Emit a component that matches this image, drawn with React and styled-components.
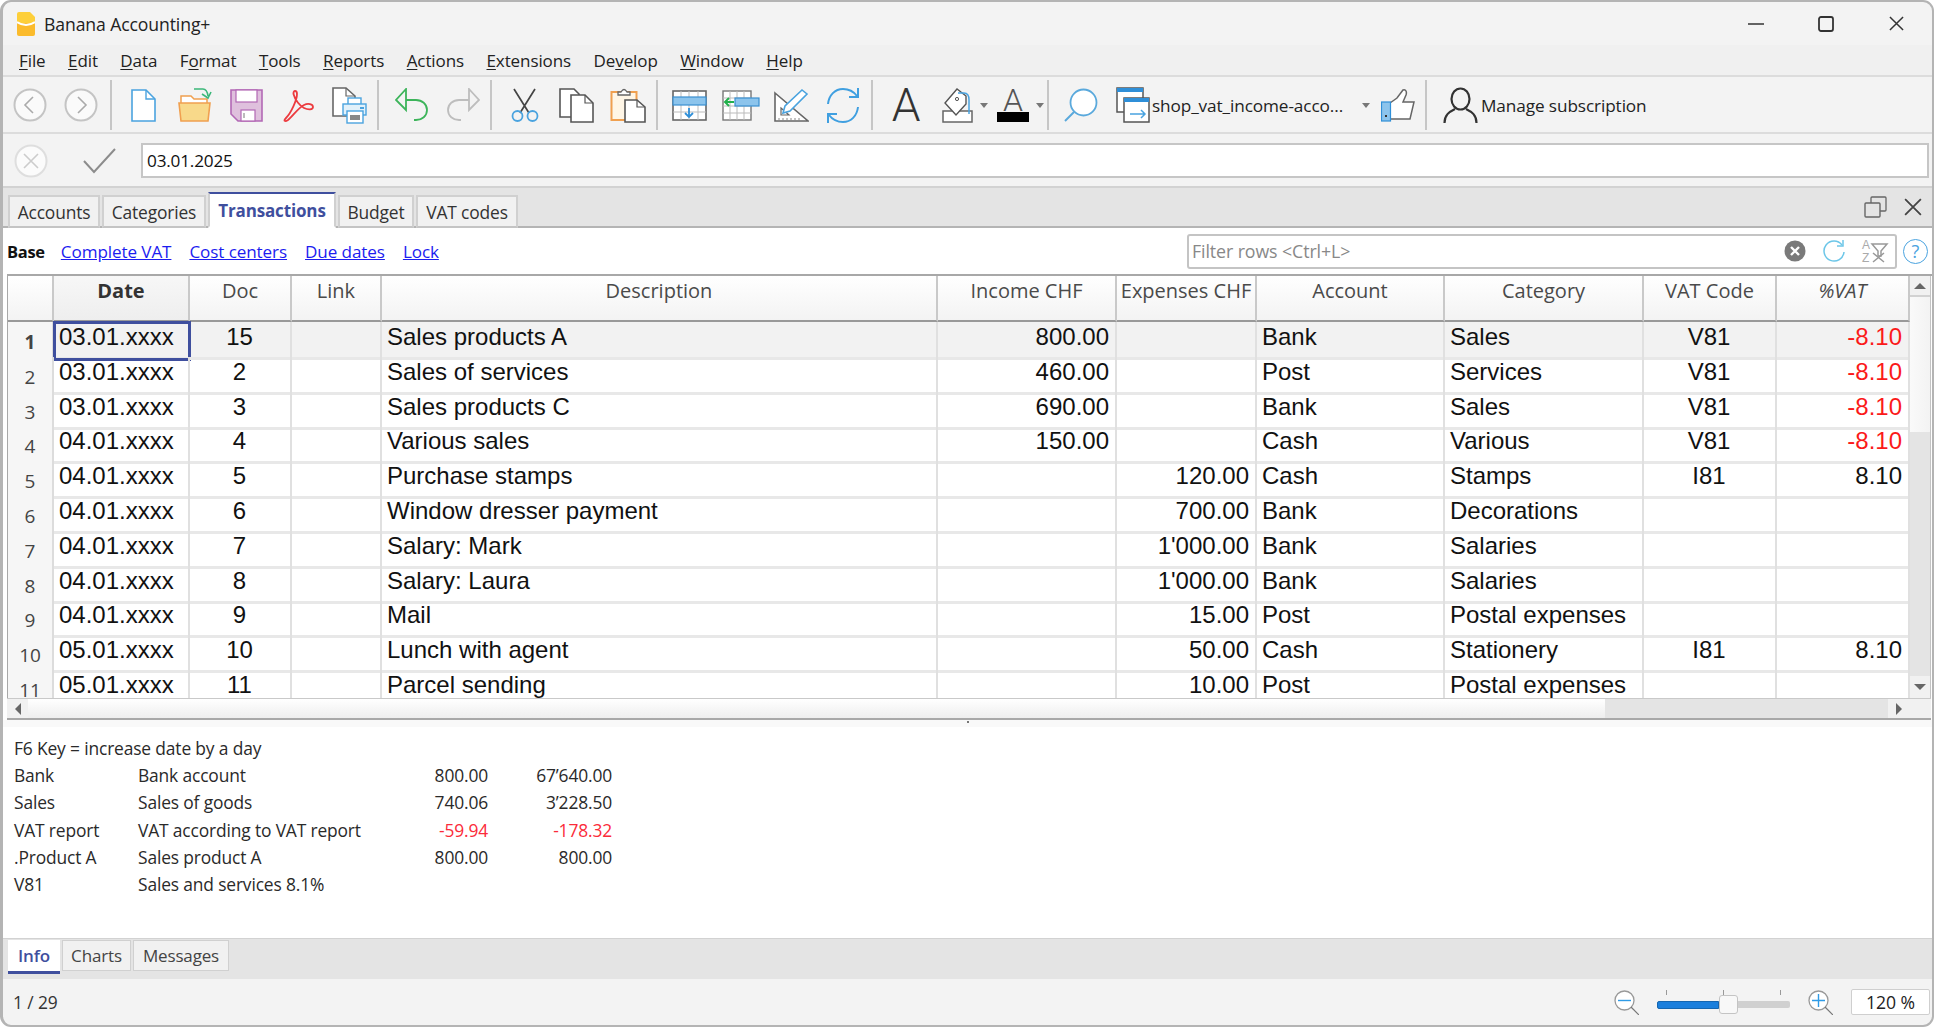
import React from 'react';
import styled, { createGlobalStyle } from 'styled-components';

const UI_FONT = '"Open Sans", "Noto Sans", sans-serif';
const GRID_FONT = '"Liberation Sans", Arial, sans-serif';
const ACTIVE = '#3f4f9e';
const COLUMNS = '46px 136px 102px 90px 556px 179px 140px 188px 199px 133px 133px';

const GlobalStyle = createGlobalStyle`
  html, body { margin: 0; padding: 0; background: #fff; }
  body { font-family: ${UI_FONT}; overflow: hidden; }
  * { box-sizing: border-box; }
`;

const Window = styled.div`
  width: 1934px;
  height: 1027px;
  display: flex;
  flex-direction: column;
  background: #f3f3f3;
  border: solid #b4b4b4;
  border-width: 2px 2px 2px 3px;
  border-radius: 11px;
  overflow: hidden;
`;

const TitleBar = styled.div`
  height: 43px;
  flex: none;
  display: flex;
  align-items: center;
  padding-left: 14px;
  font-size: 17.6px;
  color: #222;
  letter-spacing: -0.1px;
`;

const TitleText = styled.span`
  margin-left: 9px;
`;

const WinButtons = styled.div`
  margin-left: auto;
  display: flex;
  padding-right: 1px;
`;

const WinButton = styled.div`
  width: 70px;
  height: 30px;
  display: flex;
  align-items: center;
  justify-content: center;
`;

const MenuBar = styled.div`
  height: 32px;
  flex: none;
  display: flex;
  align-items: center;
  gap: 22.5px;
  padding: 1px 0 0 16px;
  background: #f0f0f0;
  border-bottom: 2px solid #dcdcdc;
  font-size: 17px;
  color: #222;
  letter-spacing: -0.1px;

  u { text-underline-offset: 2px; }
`;

const ToolBar = styled.div`
  height: 57px;
  flex: none;
  display: flex;
  align-items: center;
  padding: 1px 0 0 1px;
  border-bottom: 2px solid #dcdcdc;
`;

const Tool = styled.div`
  width: ${({ $w }) => $w || 51}px;
  margin-left: ${({ $ml }) => $ml || 0}px;
  flex: none;
  display: flex;
  align-items: center;
  justify-content: center;
`;

const Sep = styled.div`
  width: 2px;
  height: 50px;
  flex: none;
  margin: 0 ${({ $r }) => $r || 0}px 0 ${({ $l }) => $l || 0}px;
  background: #c6c6c6;
`;

const Caret = styled.div`
  width: 0;
  height: 0;
  flex: none;
  margin-left: ${({ $ml }) => $ml || 0}px;
  border-left: 4px solid transparent;
  border-right: 4px solid transparent;
  border-top: 5px solid #777;
`;

const BigGlyph = styled.span`
  font-family: Roboto, sans-serif;
  font-weight: 300;
  font-size: 46px;
  line-height: 46px;
  color: #333;
`;

const ToolText = styled.span`
  flex: none;
  width: ${({ $w }) => $w}px;
  margin-left: ${({ $ml }) => $ml || 0}px;
  font-size: 17.2px;
  color: #222;
  white-space: nowrap;
  letter-spacing: -0.1px;
`;

const FormulaBar = styled.div`
  height: 54px;
  flex: none;
  display: flex;
  align-items: center;
  padding: 1px 3px 0 11px;
  border-bottom: 2px solid #d2d2d2;
`;

const FormulaInput = styled.div`
  margin-left: 16px;
  flex: 1;
  height: 35px;
  display: flex;
  align-items: center;
  padding-left: 4px;
  background: #fff;
  border: 2px solid #c6c6c6;
  font-size: 17.2px;
  color: #111;
  letter-spacing: -0.2px;
`;

const TabStrip = styled.div`
  height: 40px;
  flex: none;
  display: flex;
  align-items: flex-end;
  background: #e4e4e4;
  border-bottom: 2px solid #b4b4b4;
  padding: 0 10px 0 5px;
`;

const TabItem = styled.div`
  width: ${({ $w }) => $w}px;
  height: ${({ $active }) => ($active ? 36 : 33)}px;
  margin: 0 2px -2px 0;
  display: flex;
  align-items: center;
  justify-content: center;
  font-size: ${({ $active }) => ($active ? 17 : 17.4)}px;
  letter-spacing: -0.15px;
  color: ${({ $active }) => ($active ? ACTIVE : '#333')};
  font-weight: ${({ $active }) => ($active ? 700 : 400)};
  background: ${({ $active }) => ($active ? '#fff' : '#f1f1f1')};
  border: 2px solid #d0d0d0;
  border-bottom-color: ${({ $active }) => ($active ? '#fff' : '#c4c4c4')};
  border-top-color: ${({ $active }) => ($active ? ACTIVE : '#d0d0d0')};
`;

const StripIcons = styled.div`
  margin-left: auto;
  align-self: center;
  display: flex;
  align-items: center;
  gap: 17px;
`;

const Sheet = styled.div`
  flex: none;
  display: flex;
  flex-direction: column;
  background: #fff;
  padding-left: 4px;
`;

const ViewRow = styled.div`
  height: 46px;
  display: flex;
  align-items: center;
`;

const ViewLink = styled.a`
  margin-left: ${({ $ml }) => $ml}px;
  font-size: 17.1px;
  color: #1c1cf0;
  text-decoration: underline;
  letter-spacing: -0.1px;
`;

const ViewBase = styled.span`
  font-size: 16.5px;
  font-weight: 700;
  color: #111;
  letter-spacing: -0.3px;
`;

const FilterBox = styled.div`
  margin-left: auto;
  width: 710px;
  height: 35px;
  display: flex;
  align-items: center;
  padding: 0 7px 0 3px;
  background: #fff;
  border: 2px solid #c4c4c4;
  border-radius: 3px;
  font-size: 17.8px;
  color: #888;
  letter-spacing: -0.1px;
`;

const FilterIcons = styled.div`
  margin-left: auto;
  display: flex;
  align-items: center;
  gap: 16px;
`;

const HelpMark = styled.div`
  width: 25px;
  height: 25px;
  margin: 0 4px 0 6px;
  flex: none;
  border-radius: 50%;
  border: 1.5px solid #4aa3df;
  display: flex;
  align-items: center;
  justify-content: center;
  font-size: 18px;
  color: #4aa3df;
`;

const TableArea = styled.div`
  display: flex;
  height: 424px;
  border-top: 2px solid #a8a8a8;
`;

const Grid = styled.div`
  width: 1903px;
  height: 100%;
  flex: none;
  overflow: hidden;
  border-left: 1px solid #a8a8a8;
`;

const HeaderRow = styled.div`
  display: grid;
  grid-template-columns: ${COLUMNS};
  height: 46px;
`;

const HeaderCell = styled.div`
  padding-top: 2px;
  text-align: center;
  font-size: 20px;
  line-height: 26px;
  white-space: nowrap;
  overflow: hidden;
  color: ${({ $bold }) => ($bold ? '#333' : '#4a4a4a')};
  font-weight: ${({ $bold }) => ($bold ? 700 : 400)};
  font-style: ${({ $italic }) => ($italic ? 'italic' : 'normal')};
  background: ${({ $bold }) =>
    $bold ? 'linear-gradient(#f7f7f7, #eeeeee)' : 'linear-gradient(#ffffff, #f3f3f3)'};
  border-right: 2px solid #c9c9c9;
  border-bottom: 2px solid #999;
`;

const Row = styled.div`
  display: grid;
  grid-template-columns: ${COLUMNS};
  height: 34.8px;
  background: ${({ $current }) => ($current ? '#f2f2f2' : '#fff')};
`;

const NumCell = styled.div`
  padding-top: 5px;
  text-align: center;
  font-size: 19px;
  line-height: 30px;
  color: #444;
  font-weight: ${({ $current }) => ($current ? 700 : 400)};
  background: #f6f6f6;
  border-right: 2px solid #dcdcdc;
  border-bottom: 3px solid #e8e8e8;
`;

const Cell = styled.div`
  padding: 0 ${({ $pr }) => $pr || 6}px 0 5px;
  text-align: ${({ $align }) => $align || 'left'};
  font-family: ${GRID_FONT};
  font-size: 24px;
  line-height: 30px;
  white-space: nowrap;
  overflow: hidden;
  color: ${({ $red }) => ($red ? '#fb1a1a' : '#111')};
  border-right: 2px solid #e0e0e0;
  border-bottom: 3px solid #e8e8e8;
  outline: ${({ $selected }) => ($selected ? `3px solid ${ACTIVE}` : 'none')};
  outline-offset: -2px;
`;

const VScroll = styled.div`
  width: 21px;
  flex: none;
  display: flex;
  flex-direction: column;
  border-right: 1px solid #c4c4c4;
`;

const ScrollArrow = styled.div`
  flex: none;
  width: ${({ $w }) => $w || 'auto'};
  height: ${({ $h }) => $h || 'auto'};
  display: flex;
  align-items: center;
  justify-content: center;
  background: #f1f1f1;
`;

const ScrollThumb = styled.div`
  flex: none;
  height: ${({ $h }) => $h || 'auto'};
  width: ${({ $w }) => $w || 'auto'};
  background: ${({ $horizontal }) =>
    $horizontal ? 'linear-gradient(#ffffff, #eeeeee)' : 'linear-gradient(90deg, #fafafa, #f3f3f3)'};
  border-top: ${({ $horizontal }) => ($horizontal ? 'none' : '2px solid #d2d2d2')};
`;

const ScrollTrack = styled.div`
  flex: 1;
  background: #e4e4e4;
`;

const Triangle = styled.div`
  width: 0;
  height: 0;
  border-style: solid;
  border-color: transparent;
  ${({ $dir }) =>
    ({
      up: 'border-width: 0 6px 6px 6px; border-bottom-color: #666;',
      down: 'border-width: 6px 6px 0 6px; border-top-color: #666;',
      left: 'border-width: 6px 6px 6px 0; border-right-color: #666;',
      right: 'border-width: 6px 0 6px 6px; border-left-color: #666;',
    })[$dir]}
`;

const HScroll = styled.div`
  height: 22px;
  display: flex;
  margin-right: 1px;
  background: #f1f1f1;
  border-top: 1px solid #c9c9c9;
  border-bottom: 2px solid #a8a8a8;
`;

const Splitter = styled.div`
  height: 7px;
  flex: none;
  background: #f9f9f9;
  display: flex;
  justify-content: center;
`;

const SplitterDot = styled.div`
  width: 2px;
  height: 2px;
  margin-top: 1px;
  background: #777;
`;

const InfoPanel = styled.div`
  height: 211px;
  flex: none;
  padding: 7.5px 0 0 11px;
  background: #fff;
  display: grid;
  grid-template-columns: 124px 260px 90px 124px;
  grid-auto-rows: 27.2px;
  align-items: center;
  justify-content: start;
  font-size: 17.4px;
  color: #2a2a2a;
  letter-spacing: -0.15px;
`;

const InfoHint = styled.div`
  grid-column: 1 / -1;
`;

const InfoValue = styled.div`
  text-align: right;
  color: ${({ $red }) => ($red ? '#fb2b3a' : '#2a2a2a')};
`;

const BottomTabs = styled.div`
  height: 41px;
  flex: none;
  display: flex;
  padding: 2px 0 0 5px;
  background: #e4e4e4;
  border-top: 1px solid #d2d2d2;
`;

const BottomTab = styled.div`
  width: ${({ $w }) => $w}px;
  height: ${({ $active }) => ($active ? 34 : 31)}px;
  margin-right: 2px;
  margin-top: -1px;
  display: flex;
  align-items: center;
  justify-content: center;
  font-size: 17px;
  letter-spacing: -0.15px;
  color: ${({ $active }) => ($active ? ACTIVE : '#444')};
  font-weight: ${({ $active }) => ($active ? 600 : 400)};
  background: ${({ $active }) => ($active ? '#fff' : '#f1f1f1')};
  border: ${({ $active }) => ($active ? 'none' : '1.5px solid #d0d0d0')};
  border-bottom: ${({ $active }) => ($active ? `3px solid ${ACTIVE}` : '1.5px solid #d0d0d0')};
`;

const StatusBar = styled.div`
  flex: 1;
  display: flex;
  align-items: center;
  padding: 0 2px 0 10px;
  font-size: 17.4px;
  color: #333;
  letter-spacing: -0.1px;
`;

const ZoomGroup = styled.div`
  margin-left: auto;
  display: flex;
  align-items: center;
  gap: 18px;
`;

const SliderBox = styled.div`
  width: 133px;
  display: flex;
  flex-direction: column;
  gap: 3px;
`;

const SliderTicks = styled.div`
  display: flex;
  justify-content: space-between;
  padding: 0 9px;
`;

const SliderTick = styled.div`
  width: 1px;
  height: 5px;
  background: #999;
`;

const SliderTrack = styled.div`
  display: flex;
  align-items: center;
  height: 20px;
  margin-top: -3px;
`;

const SliderFill = styled.div`
  width: 62px;
  height: 8px;
  background: #1b7fdc;
  border: 1px solid #1566b0;
  border-radius: 2px 0 0 2px;
`;

const SliderRest = styled.div`
  flex: 1;
  height: 7px;
  background: #d0d0d0;
  border-radius: 0 2px 2px 0;
`;

const SliderThumb = styled.div`
  width: 19px;
  height: 19px;
  flex: none;
  background: #f8f8f8;
  border: 1px solid #c4c4c4;
  border-radius: 3px;
`;

const ZoomValue = styled.div`
  width: 79px;
  height: 26px;
  display: flex;
  align-items: center;
  justify-content: center;
  background: #fff;
  border: 1.5px solid #cfcfcf;
  border-radius: 2px;
  font-size: 17.6px;
  color: #222;
`;

const Logo = () => (
  <svg width="18" height="24" viewBox="0 0 18 24">
    <path d="M2 0 H13 L18 5 V12 H0 V2 Q0 0 2 0 Z" fill="#fdcf3a" />
    <path d="M0 11 H18 V22 Q18 24 16 24 H2 Q0 24 0 22 Z" fill="#fbbb2c" />
    <path d="M0 10 Q9 16 18 10" fill="none" stroke="#fff" strokeWidth="2" />
  </svg>
);

const CircleNav = ({ d }) => (
  <svg width="34" height="34" viewBox="0 0 34 34">
    <circle cx="17" cy="17" r="15.5" fill="#fafafa" stroke="#c4c4c4" strokeWidth="2" />
    <path d={d} fill="none" stroke="#aaa" strokeWidth="1.6" />
  </svg>
);

const NewDocIcon = () => (
  <svg width="25" height="33" viewBox="0 0 25 33">
    <path d="M1 1 H15 L24 10 V32 H1 Z" fill="#fff" stroke="#4aa3df" strokeWidth="1.6" />
    <path d="M15 1 V10 H24" fill="none" stroke="#4aa3df" strokeWidth="1.4" />
  </svg>
);

const OpenIcon = () => (
  <svg width="34" height="36" viewBox="0 0 34 36">
    <path d="M3 17 V9 H13 L16 12 H29 V17" fill="#fff" stroke="#f0a050" strokeWidth="1.5" />
    <path d="M1 16 H32 L30 34 H3 Z" fill="#f8d98a" stroke="#f0a050" strokeWidth="1.6" />
    <path d="M16 2 H25 Q29 2 30 9 M24 7 L30 11 L33 5" fill="none" stroke="#3cb87a" strokeWidth="1.6" />
  </svg>
);

const SaveIcon = () => (
  <svg width="33" height="33" viewBox="0 0 33 33">
    <path d="M1 1 H32 V32 H8 L1 25 Z" fill="#dfc0dd" stroke="#b268b5" strokeWidth="1.6" />
    <rect x="6" y="1" width="21" height="12" fill="#fff" stroke="#b268b5" strokeWidth="1.2" />
    <rect x="11" y="21" width="14" height="11" fill="#fff" stroke="#b268b5" strokeWidth="1.2" />
    <rect x="13" y="24" width="2" height="5" fill="#bbb" />
  </svg>
);

const PdfIcon = () => (
  <svg width="32" height="33" viewBox="0 0 32 33">
    <path
      d="M11.5 5 C11 1 15 1 15 5 C15 11 9 24 4 29 C1 32 3 33 6 31 C11 27 16 19 22 16 C26 14 31 15 31 18 C31 21 26 21 22 19 C18 17 13 11 11.5 5 Z"
      fill="none"
      stroke="#ec3b3f"
      strokeWidth="1.8"
    />
  </svg>
);

const PrintIcon = () => (
  <svg width="35" height="37" viewBox="0 0 35 37">
    <path d="M1 1 H14 L23 9 V29 H1 Z" fill="#fff" stroke="#666" strokeWidth="1.6" />
    <path d="M14 1 V9 H23" fill="none" stroke="#666" strokeWidth="1.2" />
    <rect x="16" y="11" width="13" height="7" fill="#fff" stroke="#4aa3df" strokeWidth="1.4" />
    <rect x="11" y="17" width="23" height="11" fill="#e2f1fa" stroke="#4aa3df" strokeWidth="1.4" />
    <rect x="28" y="20" width="4" height="2" fill="#4aa3df" />
    <rect x="15" y="24" width="16" height="12" fill="#fff" stroke="#4aa3df" strokeWidth="1.4" />
    <rect x="18" y="28" width="10" height="5" fill="#888" />
  </svg>
);

const UndoIcon = ({ color, flip }) => (
  <svg width="34" height="34" viewBox="0 0 34 34" transform={flip ? 'scale(-1 1)' : undefined}>
    <path d="M11 1 L1 12 L11 22 Z" fill="none" stroke={color} strokeWidth="1.8" />
    <path d="M11 12 H21 C27 12 32 16 32 22 C32 28 27 32 21 32 H19" fill="none" stroke={color} strokeWidth="1.8" />
  </svg>
);

const ScissorsIcon = () => (
  <svg width="28" height="35" viewBox="0 0 28 35">
    <path d="M3 1 L18 25 M24 1 L9 25" fill="none" stroke="#444" strokeWidth="1.7" />
    <circle cx="6.5" cy="28" r="5" fill="none" stroke="#4aa3df" strokeWidth="1.8" />
    <circle cx="21.5" cy="28" r="5" fill="none" stroke="#4aa3df" strokeWidth="1.8" />
  </svg>
);

const CopyIcon = () => (
  <svg width="35" height="35" viewBox="0 0 35 35">
    <path d="M1 1 H15 L20 6 V29 H1 Z" fill="#fff" stroke="#555" strokeWidth="1.6" />
    <path d="M12 7 H26 L34 15 V34 H12 Z" fill="#fff" stroke="#555" strokeWidth="1.6" />
    <path d="M26 7 V15 H34" fill="none" stroke="#555" strokeWidth="1.2" />
  </svg>
);

const PasteIcon = () => (
  <svg width="36" height="36" viewBox="0 0 36 36">
    <rect x="1.5" y="5" width="25" height="28" fill="#fff6e6" stroke="#f0a050" strokeWidth="2" />
    <path d="M8 8 V5 H11 Q14 0 17 5 H20 V8 Z" fill="#fff" stroke="#666" strokeWidth="1.3" />
    <path d="M15 13 H27 L35 20 V35 H15 Z" fill="#fff" stroke="#555" strokeWidth="1.6" />
    <path d="M27 13 V20 H35" fill="none" stroke="#555" strokeWidth="1.2" />
  </svg>
);

const InsertRowIcon = () => (
  <svg width="35" height="31" viewBox="0 0 35 31">
    <rect x="1" y="1" width="33" height="29" fill="#fff" stroke="#666" strokeWidth="1.6" />
    <path d="M1 22 H34 M9 1 V30 M17 1 V30 M26 1 V30" stroke="#bbb" strokeWidth="1" />
    <rect x="1" y="7" width="33" height="8" fill="#8cc4ec" stroke="#3a8fd0" strokeWidth="1.2" />
    <path d="M17 18 V27 M13 23 L17 27 L21 23" fill="none" stroke="#2f8fd8" strokeWidth="1.8" />
  </svg>
);

const InsertColIcon = () => (
  <svg width="38" height="31" viewBox="0 0 38 31">
    <rect x="1" y="1" width="28" height="29" fill="#fff" stroke="#777" strokeWidth="1.4" />
    <path d="M1 8 H29 M1 16 H29 M1 23 H29 M8 1 V30 M15 1 V30 M22 1 V30" stroke="#bbb" strokeWidth="1" />
    <rect x="13" y="8" width="24" height="8" fill="#8cc4ec" stroke="#3a8fd0" strokeWidth="1.2" />
    <path d="M12 12 H3 M7 8 L3 12 L7 16" fill="none" stroke="#22b04c" strokeWidth="2" />
  </svg>
);

const EditIcon = () => (
  <svg width="35" height="35" viewBox="0 0 35 35">
    <path d="M1 5 L34 33 H1 Z" fill="#fff" stroke="#666" strokeWidth="1.6" />
    <path d="M7 20 L15 27 H7 Z" fill="none" stroke="#666" strokeWidth="1.2" />
    <path d="M5 33 V30 M9 33 V30 M13 33 V30 M17 33 V30 M21 33 V30 M25 33 V30" stroke="#888" strokeWidth="1" />
    <path d="M9 25 L11 18 L28 2 L33 6 L16 23 Z" fill="#fff" stroke="#4aa3df" strokeWidth="1.6" />
  </svg>
);

const RefreshIcon = () => (
  <svg width="35" height="37" viewBox="0 0 35 37">
    <path
      d="M2 17 C3 8 9 2 17 2 C23 2 28 5 31 9 M32 1 V10 H23 M32 20 C31 29 25 35 17 35 C11 35 6 32 3 28 M2 36 V27 H11"
      fill="none"
      stroke="#3f9fe0"
      strokeWidth="2"
    />
  </svg>
);

const RowsRefreshIcon = () => (
  <svg width="24" height="24" viewBox="0 0 24 24">
    <path d="M20 6 A10 10 0 1 0 22 13" fill="none" stroke="#6cc6e8" strokeWidth="1.5" />
    <path d="M21 1 V7 H15" fill="none" stroke="#6cc6e8" strokeWidth="1.5" />
  </svg>
);

const FillIcon = () => (
  <svg width="31" height="35" viewBox="0 0 31 35">
    <rect x="1" y="23" width="29" height="11" fill="#fff" stroke="#666" strokeWidth="1.5" />
    <path d="M15 1 L3 15 L14 27 L24 16 V8 Z" fill="#fff" stroke="#555" strokeWidth="1.4" />
    <circle cx="15" cy="11" r="1.6" fill="none" stroke="#555" />
    <path d="M16 5 H22 Q27 5 27 12 V26" fill="none" stroke="#4aa3df" strokeWidth="1.5" />
  </svg>
);

const FontColorIcon = () => (
  <svg width="32" height="36" viewBox="0 0 32 36" overflow="visible">
    <text x="16" y="24" textAnchor="middle" fontFamily="Roboto, sans-serif" fontWeight="300" fontSize="32" fill="#555">
      A
    </text>
    <rect x="0" y="25" width="32" height="10" fill="#000" />
  </svg>
);

const SearchIcon = () => (
  <svg width="34" height="34" viewBox="0 0 34 34">
    <circle cx="19.5" cy="14.5" r="13" fill="#fff" stroke="#5aa9dc" strokeWidth="1.8" />
    <path d="M10 24 L1 33" stroke="#5aa9dc" strokeWidth="2" />
  </svg>
);

const WindowsIcon = () => (
  <svg width="34" height="36" viewBox="0 0 34 36">
    <rect x="1" y="1" width="26" height="24" fill="#fff" stroke="#555" strokeWidth="1.5" />
    <rect x="1" y="1" width="26" height="4" fill="#2f8fd8" />
    <rect x="8" y="11" width="25" height="24" fill="#fff" stroke="#555" strokeWidth="1.5" />
    <rect x="8" y="11" width="25" height="4" fill="#2f8fd8" />
    <path d="M14 27 H29 M25 23 L29 27 L25 31" fill="none" stroke="#4aa3df" strokeWidth="1.5" />
  </svg>
);

const ThumbIcon = () => (
  <svg width="34" height="33" viewBox="0 0 34 33">
    <path d="M9 14 L16 9 L22 1 C25 0 26 3 25 6 L22 13 H33 L29 30 H9" fill="#fff" stroke="#666" strokeWidth="1.5" />
    <rect x="0.5" y="13" width="9" height="19" fill="#8cc4ec" stroke="#2f8fd8" strokeWidth="1.2" />
    <rect x="4" y="26" width="2" height="2" fill="#333" />
  </svg>
);

const UserIcon = () => (
  <svg width="35" height="37" viewBox="0 0 35 37">
    <ellipse cx="17.5" cy="12" rx="9" ry="10.5" fill="none" stroke="#333" strokeWidth="2.2" />
    <path d="M1.5 36 C1.5 28 6 25 12 22 M33.5 36 C33.5 28 29 25 23 22" fill="none" stroke="#333" strokeWidth="2.2" />
  </svg>
);

const CloseGlyph = ({ size, color = '#333', width = 1.6 }) => (
  <svg width={size} height={size} viewBox="0 0 16 16">
    <path d="M1 1 L15 15 M15 1 L1 15" fill="none" stroke={color} strokeWidth={width} />
  </svg>
);

const CancelIcon = () => (
  <svg width="34" height="34" viewBox="0 0 34 34">
    <circle cx="17" cy="17" r="15.5" fill="#fbfbfb" stroke="#dedede" strokeWidth="2" />
    <path d="M10 10 L24 24 M24 10 L10 24" stroke="#ccc" strokeWidth="1.6" />
  </svg>
);

const CheckIcon = () => (
  <svg width="33" height="26" viewBox="0 0 33 26">
    <path d="M1 13 L11 24 L32 1" fill="none" stroke="#8c8c8c" strokeWidth="2" />
  </svg>
);

const RestoreIcon = () => (
  <svg width="23" height="22" viewBox="0 0 23 22">
    <rect x="7" y="1" width="15" height="14" rx="1" fill="none" stroke="#666" strokeWidth="1.3" />
    <rect x="1" y="7" width="15" height="14" rx="1" fill="#e4e4e4" stroke="#666" strokeWidth="1.4" />
  </svg>
);

const ClearIcon = () => (
  <svg width="22" height="22" viewBox="0 0 22 22">
    <circle cx="11" cy="11" r="10.5" fill="#7a7a7a" />
    <path d="M7 7 L15 15 M15 7 L7 15" stroke="#fff" strokeWidth="2.4" />
  </svg>
);

const SortFilterIcon = () => (
  <svg width="26" height="24" viewBox="0 0 26 24" overflow="visible">
    <text x="0" y="10" fontFamily={GRID_FONT} fontSize="12" fill="#aaa">A</text>
    <text x="0" y="23" fontFamily={GRID_FONT} fontSize="12" fill="#aaa">Z</text>
    <path d="M10 5 H25 L19 12 V17 H16 V12 Z" fill="none" stroke="#999" strokeWidth="1.5" />
    <path d="M11 14 L22 23 M22 14 L11 23" stroke="#999" strokeWidth="1.5" />
  </svg>
);

const ZoomIcon = ({ plus }) => (
  <svg width="25" height="25" viewBox="0 0 25 25">
    <circle cx="10.5" cy="10.5" r="9.5" fill="#fff" stroke="#999" strokeWidth="1.3" />
    <path d={plus ? 'M4 10.5 H17 M10.5 4 V17' : 'M4 10.5 H17'} stroke="#2f9be6" strokeWidth="1.4" />
    <path d="M17 17 L25 25" stroke="#777" strokeWidth="1.2" />
  </svg>
);

// text before the mnemonic, the mnemonic, text after it
const MENU = [
  ['', 'F', 'ile'],
  ['', 'E', 'dit'],
  ['', 'D', 'ata'],
  ['F', 'o', 'rmat'],
  ['', 'T', 'ools'],
  ['', 'R', 'eports'],
  ['', 'A', 'ctions'],
  ['', 'E', 'xtensions'],
  ['De', 'v', 'elop'],
  ['', 'W', 'indow'],
  ['', 'H', 'elp'],
];

const TABS = [
  { label: 'Accounts', w: 92 },
  { label: 'Categories', w: 104 },
  { label: 'Transactions', w: 128, active: true },
  { label: 'Budget', w: 76 },
  { label: 'VAT codes', w: 102 },
];

const HEADERS = ['', 'Date', 'Doc', 'Link', 'Description', 'Income CHF', 'Expenses CHF', 'Account', 'Category', 'VAT Code', '%VAT'];

const ROWS = [
  ['03.01.xxxx', '15', 'Sales products A', '800.00', '', 'Bank', 'Sales', 'V81', '-8.10'],
  ['03.01.xxxx', '2', 'Sales of services', '460.00', '', 'Post', 'Services', 'V81', '-8.10'],
  ['03.01.xxxx', '3', 'Sales products C', '690.00', '', 'Bank', 'Sales', 'V81', '-8.10'],
  ['04.01.xxxx', '4', 'Various sales', '150.00', '', 'Cash', 'Various', 'V81', '-8.10'],
  ['04.01.xxxx', '5', 'Purchase stamps', '', '120.00', 'Cash', 'Stamps', 'I81', '8.10'],
  ['04.01.xxxx', '6', 'Window dresser payment', '', '700.00', 'Bank', 'Decorations', '', ''],
  ['04.01.xxxx', '7', 'Salary: Mark', '', "1'000.00", 'Bank', 'Salaries', '', ''],
  ['04.01.xxxx', '8', 'Salary: Laura', '', "1'000.00", 'Bank', 'Salaries', '', ''],
  ['04.01.xxxx', '9', 'Mail', '', '15.00', 'Post', 'Postal expenses', '', ''],
  ['05.01.xxxx', '10', 'Lunch with agent', '', '50.00', 'Cash', 'Stationery', 'I81', '8.10'],
  ['05.01.xxxx', '11', 'Parcel sending', '', '10.00', 'Post', 'Postal expenses', '', ''],
];

const INFO = [
  ['Bank', 'Bank account', '800.00', '67’640.00'],
  ['Sales', 'Sales of goods', '740.06', '3’228.50'],
  ['VAT report', 'VAT according to VAT report', '-59.94', '-178.32'],
  ['.Product A', 'Sales product A', '800.00', '800.00'],
  ['V81', 'Sales and services 8.1%', '', ''],
];

function DataRow({ cells, index }) {
  const [date, doc, desc, income, expenses, account, category, code, pct] = cells;
  const current = index === 0;
  return (
    <Row $current={current}>
      <NumCell $current={current}>{index + 1}</NumCell>
      <Cell $selected={current}>{date}</Cell>
      <Cell $align="center">{doc}</Cell>
      <Cell />
      <Cell>{desc}</Cell>
      <Cell $align="right">{income}</Cell>
      <Cell $align="right">{expenses}</Cell>
      <Cell>{account}</Cell>
      <Cell>{category}</Cell>
      <Cell $align="center">{code}</Cell>
      <Cell $align="right" $red={pct.startsWith('-')}>{pct}</Cell>
    </Row>
  );
}

export default function App() {
  return (
    <>
      <GlobalStyle />
      <Window>
        <TitleBar>
          <Logo />
          <TitleText>Banana Accounting+</TitleText>
          <WinButtons>
            <WinButton>
              <svg width="16" height="2" viewBox="0 0 16 2"><path d="M0 1 H16" stroke="#333" strokeWidth="1.6" /></svg>
            </WinButton>
            <WinButton>
              <svg width="16" height="16" viewBox="0 0 16 16"><rect x="1" y="1" width="14" height="14" rx="2" fill="none" stroke="#333" strokeWidth="1.8" /></svg>
            </WinButton>
            <WinButton>
              <CloseGlyph size={15} />
            </WinButton>
          </WinButtons>
        </TitleBar>

        <MenuBar>
          {MENU.map(([before, key, after]) => (
            <span key={before + key + after}>{before}<u>{key}</u>{after}</span>
          ))}
        </MenuBar>

        <ToolBar>
          <Tool><CircleNav d="M20 9 L12 17 L20 25" /></Tool>
          <Tool><CircleNav d="M14 9 L22 17 L14 25" /></Tool>
          <Sep $l={4} $r={6} />
          <Tool $w={51.5}><NewDocIcon /></Tool>
          <Tool $w={51.5}><OpenIcon /></Tool>
          <Tool $w={51.5}><SaveIcon /></Tool>
          <Tool $w={51.5}><PdfIcon /></Tool>
          <Tool $w={51.5}><PrintIcon /></Tool>
          <Sep $l={1.5} $r={7} />
          <Tool><UndoIcon color="#3cb45a" /></Tool>
          <Tool><UndoIcon color="#bdbdbd" flip /></Tool>
          <Sep $l={2} $r={7} />
          <Tool $w={51.5}><ScissorsIcon /></Tool>
          <Tool $w={51.5}><CopyIcon /></Tool>
          <Tool $w={51.5}><PasteIcon /></Tool>
          <Sep $l={2.5} $r={6} />
          <Tool><InsertRowIcon /></Tool>
          <Tool><InsertColIcon /></Tool>
          <Tool><EditIcon /></Tool>
          <Tool $w={53}><RefreshIcon /></Tool>
          <Sep $l={1} $r={7} />
          <Tool $w={52}><BigGlyph>A</BigGlyph></Tool>
          <Tool $ml={10} $w={31}><FillIcon /></Tool>
          <Caret $ml={7} />
          <Tool $ml={9} $w={32}><FontColorIcon /></Tool>
          <Caret $ml={7} />
          <Sep $l={3} />
          <Tool $ml={15} $w={34}><SearchIcon /></Tool>
          <Tool $ml={18} $w={34}><WindowsIcon /></Tool>
          <ToolText $ml={2} $w={193}>shop_vat_income-acco...</ToolText>
          <Caret $ml={17} />
          <Tool $ml={11} $w={34}><ThumbIcon /></Tool>
          <Sep $l={10} />
          <Tool $ml={16} $w={35}><UserIcon /></Tool>
          <ToolText $ml={3} $w={180}>Manage subscription</ToolText>
        </ToolBar>

        <FormulaBar>
          <CancelIcon />
          <Tool $ml={25} $w={52}><CheckIcon /></Tool>
          <FormulaInput>03.01.2025</FormulaInput>
        </FormulaBar>

        <TabStrip>
          {TABS.map((t) => (
            <TabItem key={t.label} $w={t.w} $active={t.active}>{t.label}</TabItem>
          ))}
          <StripIcons>
            <RestoreIcon />
            <CloseGlyph size={18} color="#444" />
          </StripIcons>
        </TabStrip>

        <Sheet>
          <ViewRow>
            <ViewBase>Base</ViewBase>
            <ViewLink $ml={16}>Complete VAT</ViewLink>
            <ViewLink $ml={18}>Cost centers</ViewLink>
            <ViewLink $ml={18}>Due dates</ViewLink>
            <ViewLink $ml={18}>Lock</ViewLink>
            <FilterBox>
              Filter rows &lt;Ctrl+L&gt;
              <FilterIcons>
                <ClearIcon />
                <RowsRefreshIcon />
                <SortFilterIcon />
              </FilterIcons>
            </FilterBox>
            <HelpMark>?</HelpMark>
          </ViewRow>

          <TableArea>
            <Grid>
              <HeaderRow>
                {HEADERS.map((h) => (
                  <HeaderCell key={h} $bold={h === 'Date'} $italic={h === '%VAT'}>{h}</HeaderCell>
                ))}
              </HeaderRow>
              {ROWS.map((cells, i) => (
                <DataRow key={cells[1]} cells={cells} index={i} />
              ))}
            </Grid>
            <VScroll>
              <ScrollArrow $h="19px"><Triangle $dir="up" /></ScrollArrow>
              <ScrollThumb $h="137px" />
              <ScrollTrack />
              <ScrollArrow $h="22px"><Triangle $dir="down" /></ScrollArrow>
            </VScroll>
          </TableArea>

          <HScroll>
            <ScrollArrow $w="21px"><Triangle $dir="left" /></ScrollArrow>
            <ScrollThumb $horizontal $w="1577px" />
            <ScrollTrack />
            <ScrollArrow $w="22px"><Triangle $dir="right" /></ScrollArrow>
            <ScrollArrow $w="21px" />
          </HScroll>
        </Sheet>

        <Splitter><SplitterDot /></Splitter>

        <InfoPanel>
          <InfoHint>F6 Key = increase date by a day</InfoHint>
          {INFO.map(([code, name, a, b]) => (
            <React.Fragment key={code}>
              <div>{code}</div>
              <div>{name}</div>
              <InfoValue $red={a.startsWith('-')}>{a}</InfoValue>
              <InfoValue $red={b.startsWith('-')}>{b}</InfoValue>
            </React.Fragment>
          ))}
        </InfoPanel>

        <BottomTabs>
          <BottomTab $active $w={52}>Info</BottomTab>
          <BottomTab $w={69}>Charts</BottomTab>
          <BottomTab $w={96}>Messages</BottomTab>
        </BottomTabs>

        <StatusBar>
          1 / 29
          <ZoomGroup>
            <ZoomIcon />
            <SliderBox>
              <SliderTicks>
                <SliderTick />
                <SliderTick />
                <SliderTick />
              </SliderTicks>
              <SliderTrack>
                <SliderFill />
                <SliderThumb />
                <SliderRest />
              </SliderTrack>
            </SliderBox>
            <ZoomIcon plus />
            <ZoomValue>120 %</ZoomValue>
          </ZoomGroup>
        </StatusBar>
      </Window>
    </>
  );
}
